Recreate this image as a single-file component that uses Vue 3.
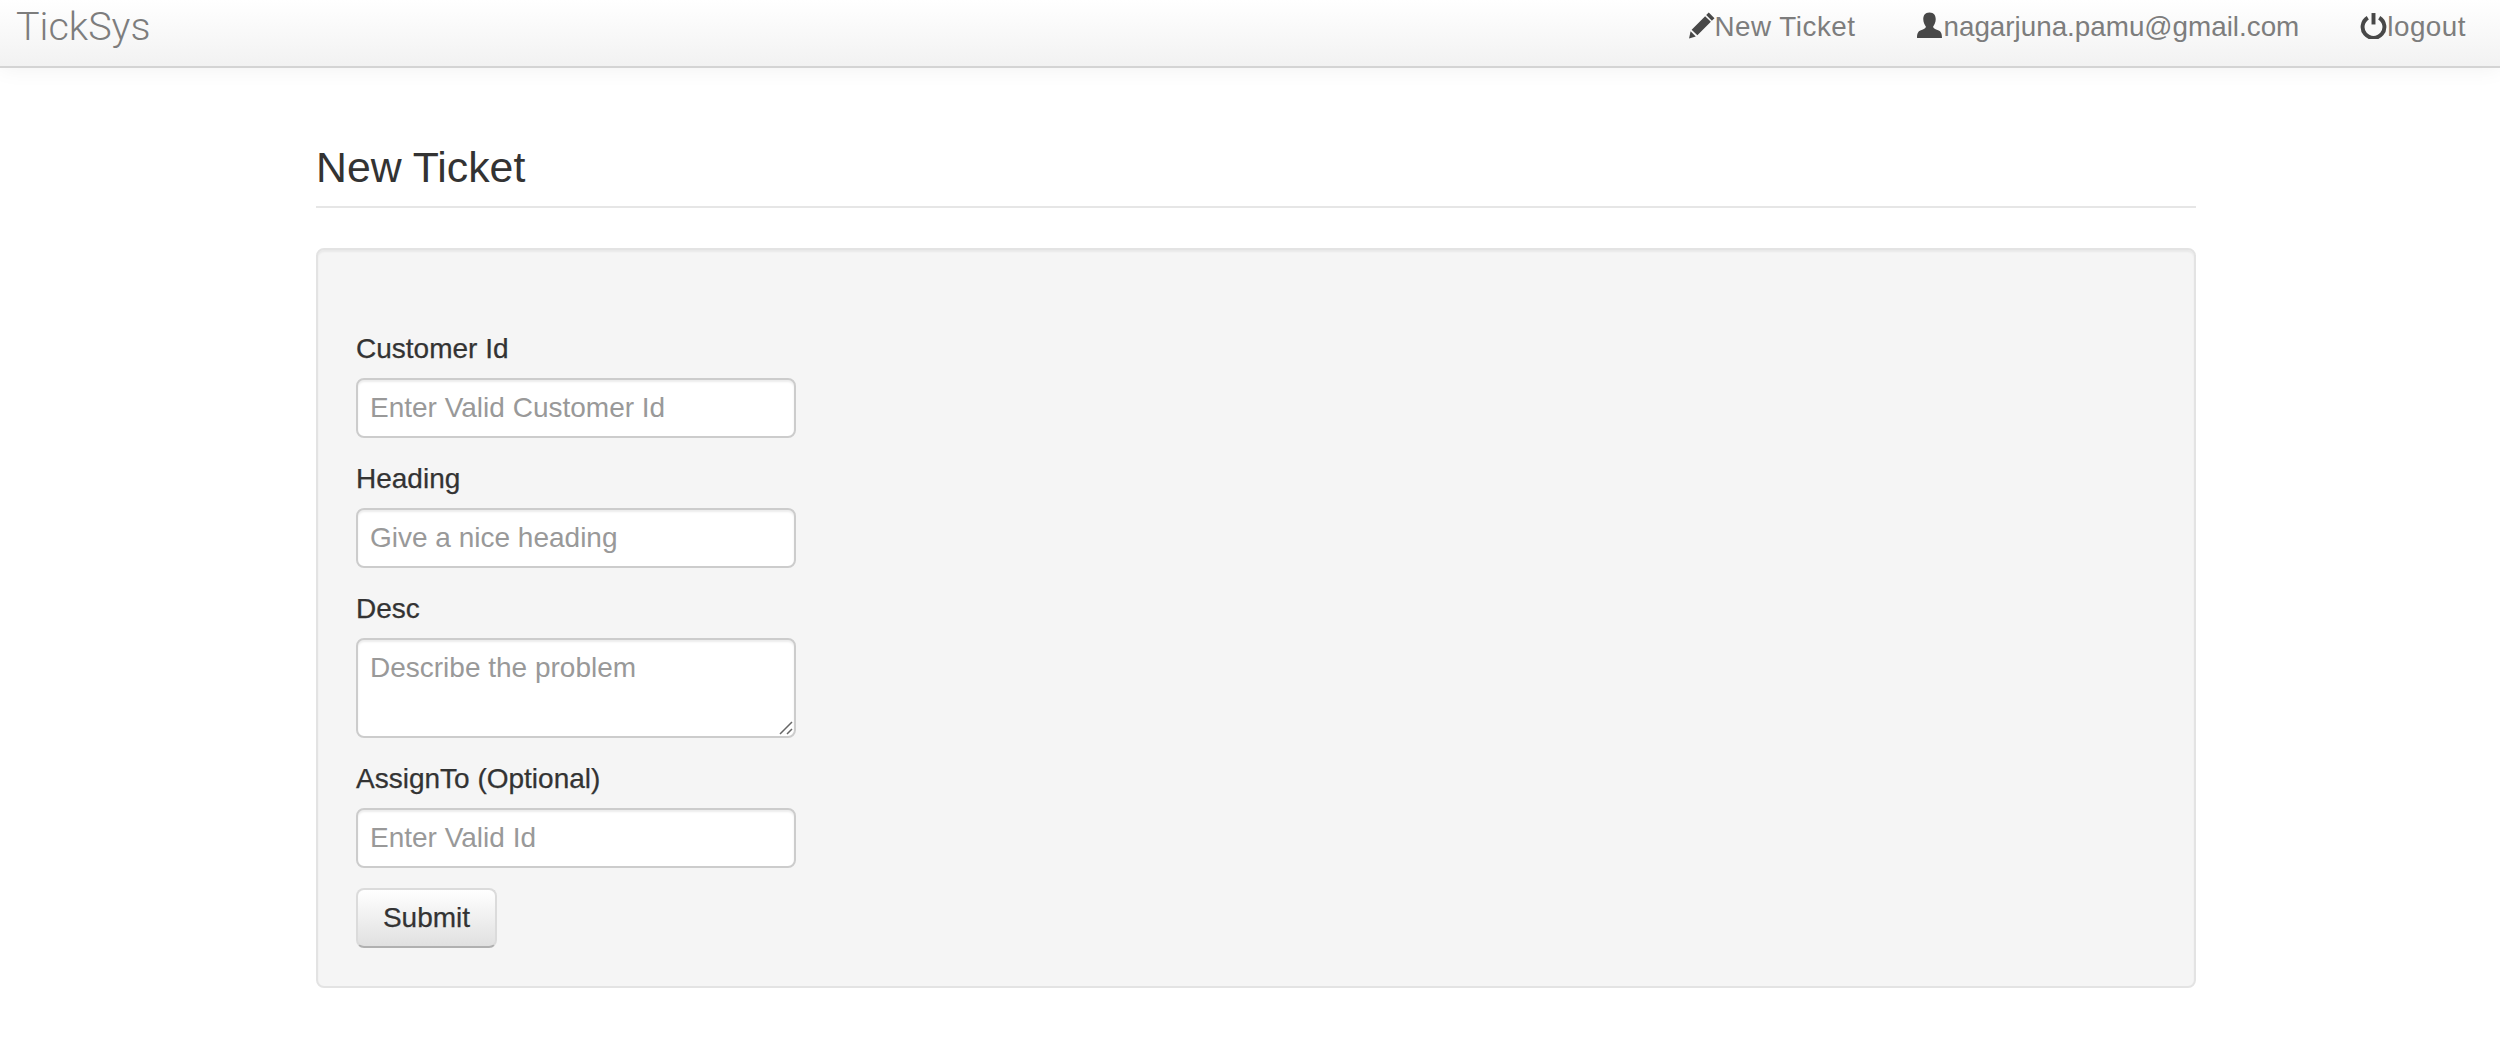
<script setup>
const fields = [
  { label: 'Customer Id', placeholder: 'Enter Valid Customer Id' },
  { label: 'Heading', placeholder: 'Give a nice heading' },
  { label: 'Desc', placeholder: 'Describe the problem', multiline: true },
  { label: 'AssignTo (Optional)', placeholder: 'Enter Valid Id' }
]
</script>

<template>
  <nav class="navbar">
    <a class="brand">TickSys</a>
    <ul class="nav-links">
      <li class="spaced">
        <svg class="icon" viewBox="0 0 26 26"><path d="M20 0.500l5.500 5.500-2.500 2.500-5.500-5.500zM16.500 4l5.500 5.500-13 13-5.500-5.500zM2.500 18.500l5 5-6.500 2z" /></svg>
        <span>New Ticket</span>
      </li>
      <li>
        <svg class="icon" viewBox="0 0 26 26"><path d="M13 0.500c4.500 0 6 3 6 6.500 0 3-1.500 5.500-2.500 7 0 1.500 1 2.200 3.500 3 3.500 1 5 2.500 5 8H1c0-5.500 1.500-7 5-8 2.500-.8 3.500-1.500 3.500-3-1-1.500-2.500-4-2.500-7 0-3.500 1.500-6.500 6-6.500z" /></svg>
        <span>nagarjuna.pamu@gmail.com</span>
      </li>
      <li class="spaced">
        <svg class="icon outline" viewBox="0 0 26 26"><path d="M7.500 5.500a10.500 10.500 0 1 0 11 0" /><path d="M13 1v11" /></svg>
        <span>logout</span>
      </li>
    </ul>
  </nav>

  <main class="container">
    <h1 class="page-title">New Ticket</h1>
    <form class="well" @submit.prevent>
      <div v-for="field in fields" :key="field.label" class="form-group">
        <label>{{ field.label }}</label>
        <div v-if="field.multiline" class="textarea-wrap">
          <textarea :placeholder="field.placeholder"></textarea>
          <svg class="grip" viewBox="0 0 14 14"><path d="M1 13L13 1M8 13l5-5" /></svg>
        </div>
        <input v-else type="text" :placeholder="field.placeholder" />
      </div>
      <button type="submit">Submit</button>
    </form>
  </main>
</template>

<style>
html, body {
  background: #fff;
}
</style>

<style scoped>
.navbar {
  display: flex;
  justify-content: space-between;
  align-items: center;
  height: 54px;
  padding: 0 34px 12px 16px;
  background: linear-gradient(to bottom, #fff, #f2f2f2);
  border-bottom: 2px solid #d4d4d4;
  box-shadow: 0 2px 20px rgba(0, 0, 0, 0.05);
  color: #7d7d7d;
}

.brand {
  margin-bottom: 2px;
  font-family: Roboto, "Liberation Sans", sans-serif;
  font-size: 39.500px;
  font-weight: 300;
}

.nav-links {
  display: flex;
  gap: 61px;
  margin: 0;
  padding: 0;
  list-style: none;
  font-family: "Liberation Sans", Arial, sans-serif;
  font-size: 27.800px;
}

.nav-links li {
  display: flex;
  align-items: center;
}

.nav-links .spaced {
  letter-spacing: 0.500px;
}

.icon {
  width: 27px;
  height: 27px;
  margin-top: -3px;
  fill: #484848;
}

.icon.outline {
  fill: none;
  stroke: #484848;
  stroke-width: 3.800;
}

.container {
  width: 1880px;
  margin-left: 316px;
  font-family: "Liberation Sans", Arial, sans-serif;
  color: #333;
}

.page-title {
  margin: 76px 0 40px;
  padding-bottom: 16px;
  border-bottom: 2px solid #e6e6e6;
  font-size: 42.800px;
  font-weight: 400;
  line-height: 46px;
}

.well {
  padding: 78px 38px 38px;
  background: #f5f5f5;
  border: 2px solid #e3e3e3;
  border-radius: 8px;
  box-shadow: inset 0 2px 2px rgba(0, 0, 0, 0.05);
}

.form-group {
  margin-bottom: 20px;
}

label {
  display: block;
  height: 40px;
  margin-bottom: 10px;
  font-size: 28px;
  line-height: 41px;
  -webkit-text-stroke: 0.250px #333;
}

input,
textarea {
  display: block;
  box-sizing: border-box;
  width: 440px;
  height: 60px;
  padding: 12px;
  background: #fff;
  border: 2px solid #ccc;
  border-radius: 8px;
  box-shadow: inset 0 2px 2px rgba(0, 0, 0, 0.075);
  font-family: inherit;
  font-size: 28px;
  color: #555;
}

.textarea-wrap {
  position: relative;
  width: 440px;
}

textarea {
  height: 100px;
  padding-top: 8px;
  line-height: 40px;
  resize: none;
}

.grip {
  position: absolute;
  right: 3px;
  bottom: 3px;
  width: 14px;
  height: 14px;
  fill: none;
  stroke: #666;
  stroke-width: 1.500;
}

input::placeholder,
textarea::placeholder {
  color: #999;
  opacity: 1;
}

button {
  display: block;
  box-sizing: border-box;
  width: 141px;
  height: 60px;
  background: linear-gradient(to bottom, #fff, #e0e0e0);
  border: 2px solid #dbdbdb;
  border-bottom-color: #b0b0b0;
  border-radius: 8px;
  font-family: inherit;
  font-size: 28px;
  color: #333;
  -webkit-text-stroke: 0.250px #333;
}
</style>
